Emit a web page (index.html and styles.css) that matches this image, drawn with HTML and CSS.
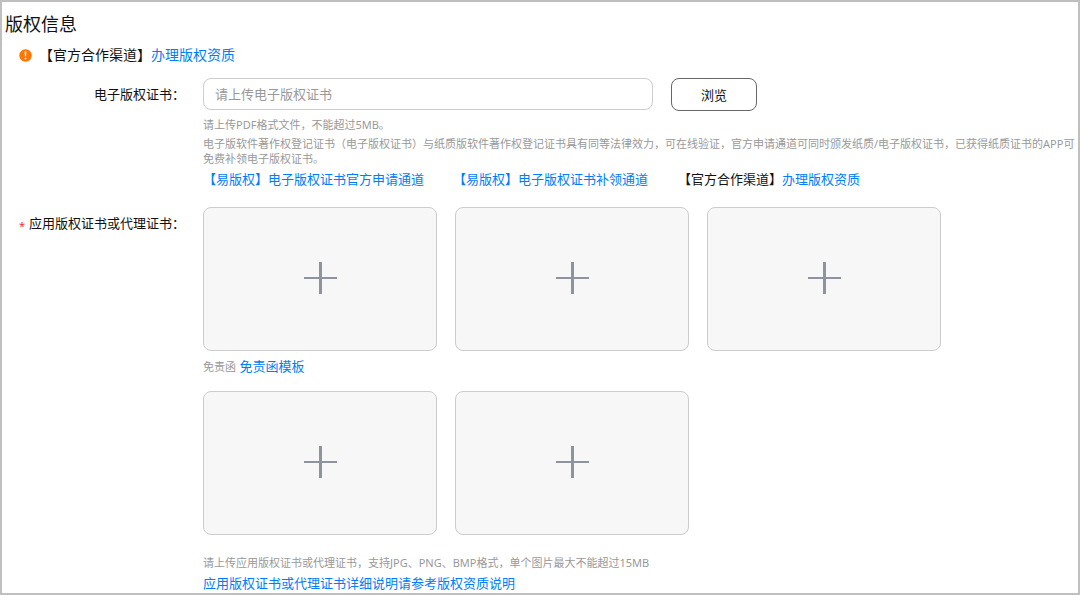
FILE: index.html
```html
<!DOCTYPE html>
<html lang="zh-CN">
<head>
<meta charset="utf-8">
<meta name="viewport" content="width=device-width, initial-scale=1">
<title>版权信息</title>
<link rel="stylesheet" href="styles.css">
</head>
<body>
<main class="panel">
  <h1 class="title">版权信息</h1>
  <p class="notice">
    <svg class="notice-icon" viewBox="0 0 13 13" aria-hidden="true">
      <circle cx="6.5" cy="6.5" r="6.2" fill="#ff7500"/>
      <path d="M5.6 2.6h1.8l-.3 4.9H5.9z" fill="#fff"/>
      <circle cx="6.5" cy="9.6" r=".95" fill="#fff"/>
    </svg>
    <span>【官方合作渠道】<a href="#">办理版权资质</a></span>
  </p>

  <form class="form">
    <label class="label" for="cert">电子版权证书：</label>
    <div class="field">
      <div class="picker">
        <input class="input" id="cert" type="text" placeholder="请上传电子版权证书">
        <button class="browse" type="button">浏览</button>
      </div>
      <p class="hint format">请上传PDF格式文件，不能超过5MB。</p>
      <p class="hint">电子版软件著作权登记证书（电子版权证书）与纸质版软件著作权登记证书具有同等法律效力，可在线验证，官方申请通道可同时颁发纸质/电子版权证书，已获得纸质证书的APP可免费补领电子版权证书。</p>
      <div class="channels">
        <a href="#">【易版权】电子版权证书官方申请通道</a>
        <a href="#">【易版权】电子版权证书补领通道</a>
        <span>【官方合作渠道】<a href="#">办理版权资质</a></span>
      </div>
    </div>

    <div class="label" id="images-label"><span class="required">*</span>应用版权证书或代理证书：</div>
    <div class="field" role="group" aria-labelledby="images-label">
      <div class="tiles">
        <button class="tile" type="button" aria-label="上传"><svg class="plus" viewBox="0 0 33 32"><path d="M0 15h33v2H0z"/><path d="M15 0h3v32h-3z"/></svg></button>
        <button class="tile" type="button" aria-label="上传"><svg class="plus" viewBox="0 0 33 32"><path d="M0 15h33v2H0z"/><path d="M15 0h3v32h-3z"/></svg></button>
        <button class="tile" type="button" aria-label="上传"><svg class="plus" viewBox="0 0 33 32"><path d="M0 15h33v2H0z"/><path d="M15 0h3v32h-3z"/></svg></button>
      </div>
      <p class="disclaimer"><span class="hint">免责函</span> <a href="#">免责函模板</a></p>
      <div class="tiles">
        <button class="tile" type="button" aria-label="上传"><svg class="plus" viewBox="0 0 33 32"><path d="M0 15h33v2H0z"/><path d="M15 0h3v32h-3z"/></svg></button>
        <button class="tile" type="button" aria-label="上传"><svg class="plus" viewBox="0 0 33 32"><path d="M0 15h33v2H0z"/><path d="M15 0h3v32h-3z"/></svg></button>
      </div>
      <p class="hint image-hint">请上传应用版权证书或代理证书，支持JPG、PNG、BMP格式，单个图片最大不能超过15MB</p>
      <p class="guide"><a href="#">应用版权证书或代理证书详细说明请参考版权资质说明</a></p>
    </div>
  </form>
</main>
</body>
</html>
```
FILE: styles.css
```css
* {
  box-sizing: border-box;
}

body {
  margin: 0;
  background: #fff;
  color: #111;
  font: 13px/18px "Noto Sans", "Noto Sans CJK SC", sans-serif;
}

h1,
p {
  margin: 0;
}

a {
  color: #007dff;
  text-decoration: none;
}

.panel {
  min-height: 100vh;
  padding-top: 10px;
  border: 2px solid #bfbfbf;
}

.title {
  padding-left: 3px;
  font-size: 18px;
  font-weight: 400;
  line-height: 24px;
}

.notice {
  display: flex;
  align-items: center;
  gap: 7px;
  margin-top: 9px;
  padding-left: 17px;
  font-size: 14px;
  line-height: 20px;
}

.notice-icon {
  width: 13px;
  height: 13px;
}

.form {
  display: grid;
  grid-template-columns: 183px 1fr;
  column-gap: 18px;
  row-gap: 19px;
  margin-top: 13px;
}

.label {
  padding-top: 7px;
  text-align: right;
}

.required {
  margin-right: 4px;
  color: #fa2a2d;
  font-size: 11px;
  vertical-align: -2px;
}

.picker {
  display: flex;
  gap: 18px;
}

.input {
  width: 450px;
  height: 32px;
  padding: 0 11px;
  border: 1px solid #ccc;
  border-radius: 8px;
  background: #fff;
  color: #111;
  font: inherit;
}

.input::placeholder {
  color: #999;
}

.browse {
  width: 86px;
  height: 33px;
  padding: 0;
  border: 1px solid #666;
  border-radius: 8px;
  background: #fff;
  color: #111;
  font: inherit;
}

.hint {
  color: #999;
  font-size: 11px;
  line-height: 15px;
}

.format {
  margin: 6px 0 4px;
}

.channels {
  display: grid;
  grid-template-columns: 250px 225px auto;
  margin-top: 4px;
}

.tiles {
  display: flex;
  flex-wrap: wrap;
  gap: 18px;
}

.tile {
  display: flex;
  align-items: center;
  justify-content: center;
  width: 234px;
  height: 144px;
  padding: 0 0 2px;
  border: 1px solid #ccc;
  border-radius: 8px;
  background: #f7f7f7;
}

.plus {
  width: 33px;
  height: 32px;
  fill: #8d949e;
}

.disclaimer {
  margin: 6px 0 16px;
}

.image-hint {
  margin: 20px 0 4px;
}
```
